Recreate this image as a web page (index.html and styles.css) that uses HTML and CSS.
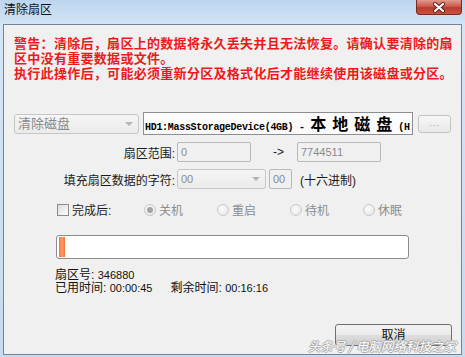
FILE: index.html
```html
<!DOCTYPE html>
<html lang="zh-CN">
<head>
    <meta charset="UTF-8">
    <title>清除扇区</title>
    <link rel="stylesheet" href="styles.css">
</head>
<body>
    <div class="window">
        <div class="titlebar">
            <span class="title">清除扇区</span>
            <div class="close">
                <svg width="14" height="11" viewBox="0 0 14 11">
                    <path d="M3 2 L11 9 M11 2 L3 9" stroke="#5b1e17" stroke-width="4" stroke-linecap="round"/>
                    <path d="M3 2 L11 9 M11 2 L3 9" stroke="#fff" stroke-width="2.2" stroke-linecap="round"/>
                </svg>
            </div>
        </div>
        <div class="client">
            <p class="warning">警告：清除后，扇区上的数据将永久丢失并且无法恢复。请确认要清除的扇<br>区中没有重要数据或文件。<br>执行此操作后，可能必须重新分区及格式化后才能继续使用该磁盘或分区。</p>

            <div class="row-disk">
                <div class="combo combo-mode"><span>清除磁盘</span><i class="combo__arrow"></i></div>
                <div class="device">HD1:MassStorageDevice(4GB) - <span class="device__cjk">本地磁盘</span>(H:)</div>
                <div class="dots">...</div>
            </div>

            <div class="form-row">
                <span class="field-label">扇区范围:</span>
                <div class="input input-start">0</div>
                <span class="arrow">-&gt;</span>
                <div class="input input-end">7744511</div>
            </div>

            <div class="form-row">
                <span class="field-label">填充扇区数据的字符:</span>
                <div class="combo combo-fill"><span>00</span><i class="combo__arrow"></i></div>
                <div class="input input-hex">00</div>
                <span class="hint">(十六进制)</span>
            </div>

            <div class="row-after">
                <span class="check"></span>
                <span class="check-label">完成后:</span>
                <span class="radio-opt"><i class="radio checked"></i>关机</span>
                <span class="radio-opt"><i class="radio"></i>重启</span>
                <span class="radio-opt"><i class="radio"></i>待机</span>
                <span class="radio-opt"><i class="radio"></i>休眠</span>
            </div>

            <div class="progress"><div class="progress__fill"></div></div>

            <div class="status">
                <div>扇区号: <span class="num">346880</span></div>
                <div>已用时间: <span class="num">00:00:45</span><span class="status__gap">剩余时间:</span> <span class="num">00:16:16</span></div>
            </div>

            <div class="footer">
                <div class="btn-cancel">取消</div>
            </div>

            <div class="watermark">头条号 / 电脑网络科技之家</div>
        </div>
    </div>
</body>
</html>
```

FILE: styles.css
```css
*{
    box-sizing: border-box;
}
body{
    margin: 0;
    font-family: "Liberation Sans", "Noto Sans CJK SC", sans-serif;
    font-size: 12px;
    color: #1b1b1b;
}
.window{
    width: 465px;
    height: 357px;
    display: flex;
    flex-direction: column;
    background: linear-gradient(180deg, #bcd5ee 0%, #d4e5f6 26px, #c6dbf0 100%);
}
.titlebar{
    height: 24px;
    display: flex;
    justify-content: space-between;
    align-items: flex-start;
    padding-left: 4px;
}
.title{
    margin-top: 4px;
    line-height: 13px;
    color: #111;
}
.close{
    width: 46px;
    height: 15px;
    margin-right: 3px;
    border: 1px solid #7b2a22;
    border-top: none;
    border-radius: 0 0 4px 4px;
    background: linear-gradient(180deg, #e19a8f 0%, #cf5a4c 45%, #b93a2e 55%, #c9553f 100%);
    display: flex;
    align-items: center;
    justify-content: center;
}
.client{
    flex: 1;
    margin: 0 3px 2px 3px;
    background: #f0f0f0;
    border: 1px solid #71849b;
    display: flex;
    flex-direction: column;
    padding: 10px 9px 8px 10px;
    position: relative;
}
.warning{
    margin: 0;
    color: #ee1a1a;
    font-family: "Noto Sans CJK SC", sans-serif;
    font-weight: bold;
    font-size: 13px;
    line-height: 15px;
    letter-spacing: 0.3px;
    white-space: nowrap;
}

/* disk row */
.row-disk{
    display: flex;
    align-items: center;
    height: 23px;
    margin-top: 32px;
}
.combo{
    height: 20px;
    border: 1px solid #c6c6c6;
    border-radius: 3px;
    background: linear-gradient(180deg, #f5f5f5, #ebebeb);
    color: #8a8a8a;
    display: flex;
    align-items: center;
    justify-content: space-between;
    padding: 0 5px 0 3px;
    line-height: 18px;
}
.combo__arrow{
    width: 0;
    height: 0;
    border-left: 4px solid transparent;
    border-right: 4px solid transparent;
    border-top: 4px solid #b5b5b5;
}
.combo-mode{
    width: 125px;
    font-size: 13px;
}
.device{
    margin-left: 4px;
    width: 270px;
    height: 23px;
    border: 1px solid #8e8e8e;
    background: #fbfbfb;
    overflow: hidden;
    white-space: nowrap;
    padding-left: 1px;
    font-family: "Liberation Mono", "Noto Sans CJK SC", monospace;
    font-weight: bold;
    font-size: 10px;
    letter-spacing: -0.3px;
    line-height: 21px;
    color: #000;
}
.device__cjk{
    font-family: "Noto Sans CJK SC", sans-serif;
    font-size: 16px;
    letter-spacing: 6px;
}
.dots{
    margin-left: 5px;
    width: 33px;
    height: 18px;
    border: 1px solid #c4c4c4;
    border-radius: 3px;
    background: linear-gradient(180deg, #f7f7f7, #e8e8e8);
    color: #a0a0a0;
    font-size: 9px;
    letter-spacing: 1px;
    text-align: center;
    line-height: 14px;
}

/* range / fill rows */
.form-row{
    display: flex;
    align-items: center;
    height: 20px;
    margin-top: 7px;
}
.field-label{
    width: 161px;
    text-align: right;
}
.input{
    height: 20px;
    border: 1px solid #b9b9b9;
    border-radius: 2px;
    background: #f0f0f0;
    color: #8a8a8a;
    padding-left: 3px;
    font-size: 11px;
    line-height: 18px;
}
.input-start{
    width: 74px;
    margin-left: 2px;
}
.arrow{
    width: 46px;
    padding-left: 22px;
}
.input-end{
    width: 84px;
}
.combo-fill{
    width: 89px;
    margin-left: 2px;
    font-size: 11px;
}
.input-hex{
    width: 23px;
    margin-left: 3px;
}
.hint{
    margin-left: 8px;
}

/* after-finish row */
.row-after{
    display: flex;
    align-items: center;
    height: 17px;
    margin-top: 12px;
    padding-left: 43px;
}
.check{
    width: 12px;
    height: 12px;
    border: 1px solid #8c8c8c;
    background: linear-gradient(135deg, #dcdcdc, #fdfdfd);
    margin-right: 3px;
}
.check-label{
    width: 72px;
}
.radio-opt{
    width: 73px;
    display: flex;
    align-items: center;
    color: #8d8d8d;
}
.radio{
    width: 12px;
    height: 12px;
    border-radius: 50%;
    border: 1px solid #c8c8c8;
    background: radial-gradient(circle at 40% 40%, #fdfdfd, #e2e2e2);
    margin-right: 3px;
    display: flex;
    align-items: center;
    justify-content: center;
}
.radio.checked::after{
    content: "";
    width: 6px;
    height: 6px;
    border-radius: 50%;
    background: #a3a3a3;
}

/* progress */
.progress{
    width: 353px;
    height: 24px;
    margin: 17px 0 0 42px;
    border: 1px solid #8b8b8b;
    border-radius: 3px;
    background: #fff;
    padding: 1px 2px;
}
.progress__fill{
    width: 6px;
    height: 100%;
    background: linear-gradient(90deg, #f4743c, #ff9c66 50%, #f4743c);
}

/* status */
.status{
    margin: 10px 0 0 41px;
    line-height: 13px;
    color: #111;
}
.num{
    font-size: 11px;
}
.status__gap{
    margin-left: 18px;
}

/* footer */
.footer{
    margin-top: auto;
    display: flex;
    justify-content: flex-end;
}
.btn-cancel{
    width: 117px;
    height: 22px;
    border: 1px solid #707070;
    border-radius: 3px;
    background: linear-gradient(180deg, #f2f2f2 0%, #ebebeb 50%, #dddddd 51%, #cfcfcf 100%);
    text-align: center;
    line-height: 20px;
    color: #111;
}
.watermark{
    position: absolute;
    right: 5px;
    bottom: 1px;
    font-family: "Noto Sans CJK SC", sans-serif;
    font-size: 12.5px;
    line-height: 15px;
    font-style: italic;
    color: #fff;
    text-shadow: 1px 0 0 #a8a8a8, -1px 0 0 #a8a8a8, 0 1px 0 #a8a8a8, 0 -1px 0 #a8a8a8;
}
```
